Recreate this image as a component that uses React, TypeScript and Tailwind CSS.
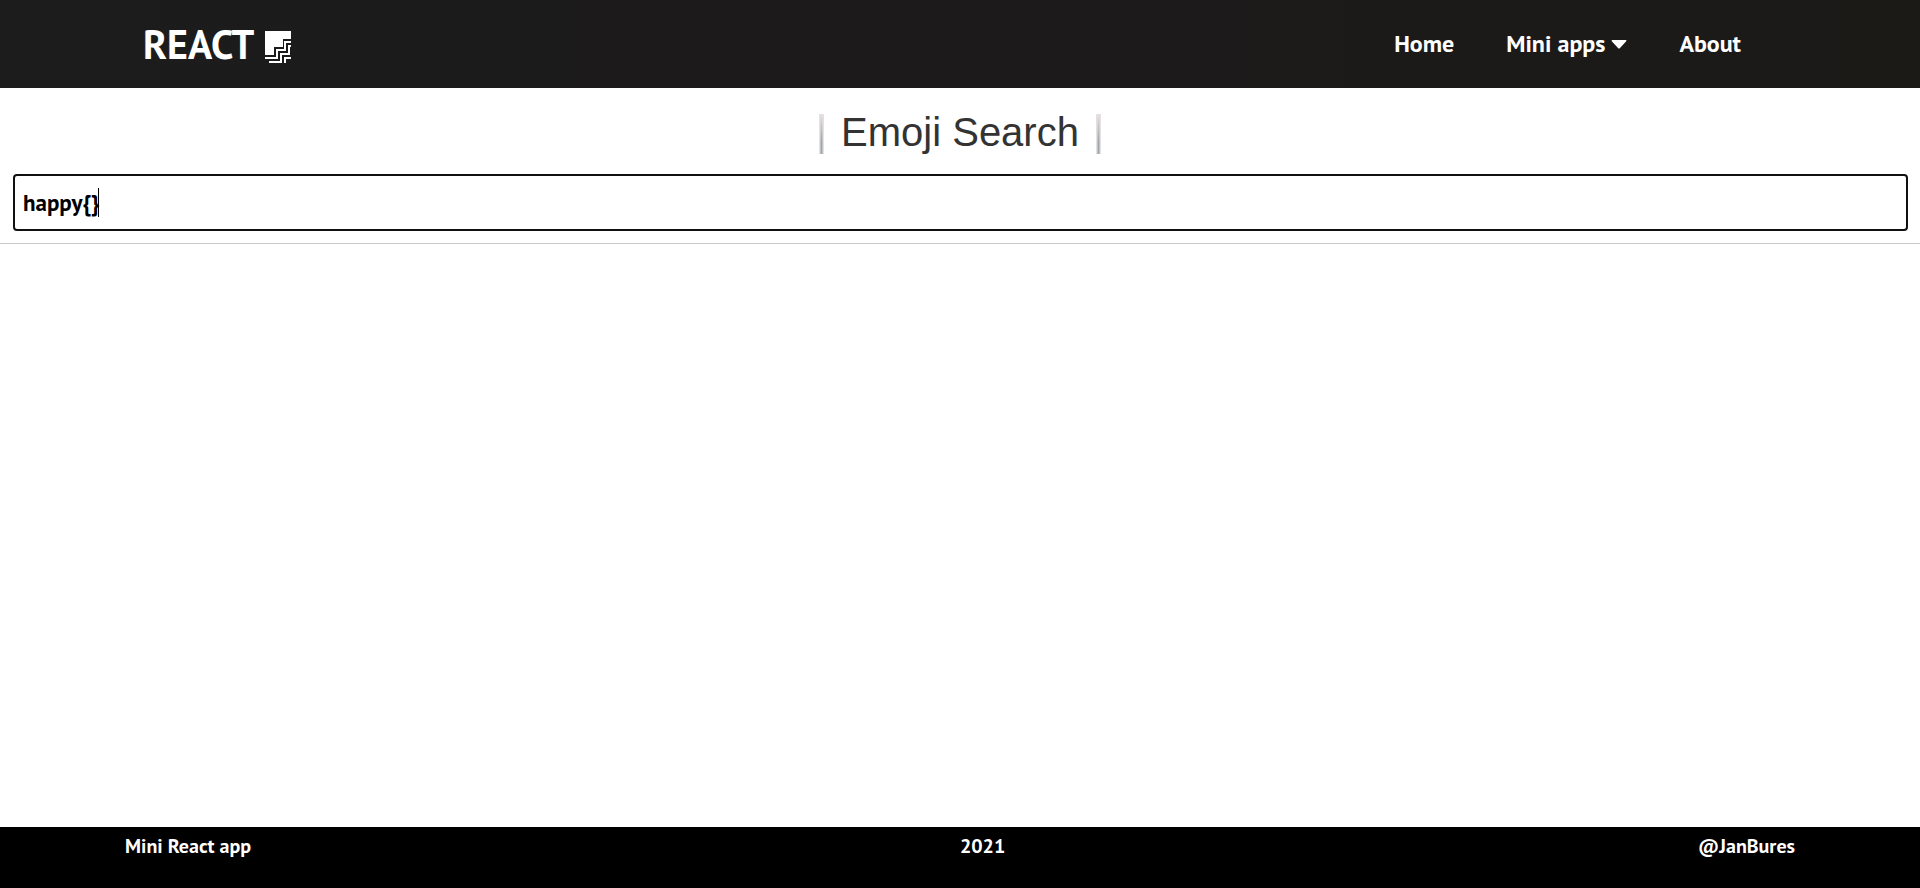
import { useState } from "react";

function Logo() {
  return (
    <svg viewBox="0 0 26 32" className="mt-[5px] h-8 w-[26px]" fill="none" aria-hidden="true">
      <path fill="#fff" d="M0 0H26V8H18V16H9V24H0Z" />
      <path stroke="#fff" strokeWidth="2" d="M26 11H20V19H12V27H0M26 15H24V23H16V31H4M26 27H20V32" />
    </svg>
  );
}

const bar =
  "h-10 w-[5px] bg-[linear-gradient(to_bottom,#e8dfe1,transparent_70%),linear-gradient(to_right,#f2f2f4,#9fa3a7,#f2f2f4)]";
const link = "flex items-center gap-[6px]";

export default function App() {
  const [query, setQuery] = useState("happy{}");
  const [edited, setEdited] = useState(false);
  return (
    <div className="flex min-h-screen flex-col bg-white font-['PT_Sans','Lato',sans-serif] font-bold">
      <header className="flex h-[88px] items-center justify-between bg-linear-to-r from-[#1c1c1c] via-[#1c1a1b] to-[#1b1a17] pr-[179px] pl-[143px] text-white">
        <a href="#" className="flex items-center gap-[11px] text-[40px] leading-none">
          REACT
          <Logo />
        </a>
        <nav className="flex items-center gap-[52px] text-[24px] leading-none">
          <a href="#" className={link}>Home</a>
          <a href="#" className={link}>
            Mini apps
            <svg viewBox="0 0 16 9" className="h-[9px] w-4" fill="#fff" aria-hidden="true">
              <path d="M1 0H15Q16 .5 15 1.5L9 8Q8 9 7 8L1 1.500Q0 .5 1 0Z" />
            </svg>
          </a>
          <a href="#" className={link}>About</a>
        </nav>
      </header>
      <main className="grow">
        <div className="flex items-start justify-center gap-[17px] pt-[26px] font-['Liberation_Sans',Arial,sans-serif] font-normal">
          <span className={bar} />
          <h1 className="text-[40px] leading-9 text-[#333]">Emoji Search</h1>
          <span className={bar} />
        </div>
        <div className="border-b border-[#c8c8c8] pt-5 pr-3 pb-3 pl-[13px]">
          <div className="relative">
            <input
              type="text"
              aria-label="Search emoji"
              value={query}
              onChange={(e) => {
                setQuery(e.target.value);
                setEdited(true);
              }}
              className="block h-[57px] w-full rounded border-2 border-[#101010] px-2 text-[23px] text-black outline-none"
            />
            {!edited && <span className="pointer-events-none absolute top-[14px] left-[85px] h-[29px] w-px bg-black" />}
          </div>
        </div>
      </main>
      <footer className="flex h-[61px] items-start justify-between bg-black px-[125px] pt-[7px] text-[20px] leading-6 text-white">
        <span className="pr-4">Mini React app</span>
        <span>2021</span>
        <span>@JanBures</span>
      </footer>
    </div>
  );
}
